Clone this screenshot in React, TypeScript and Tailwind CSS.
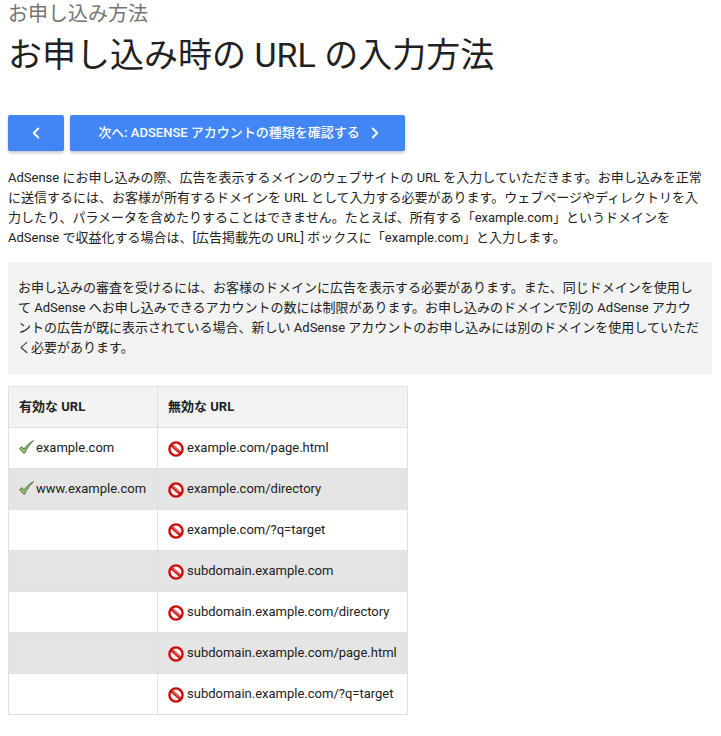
import { ChevronLeft, ChevronRight } from "lucide-react";

const rows = [
  ["example.com", "example.com/page.html"],
  ["www.example.com", "example.com/directory"],
  ["", "example.com/?q=target"],
  ["", "subdomain.example.com"],
  ["", "subdomain.example.com/directory"],
  ["", "subdomain.example.com/page.html"],
  ["", "subdomain.example.com/?q=target"],
];

function Check() {
  return (
    <svg width="15" height="14" viewBox="0 0 15 14" className="mr-[2px] inline-block align-[-2px]">
      <path d="M0.6 8.6 L2.8 6.6 L5 9 C7.5 5.6 10.4 2.8 14.6 0.6 C11 4 8 8 5.6 13.2 L4.6 13.2 Z" fill="#8cc265" stroke="#41592f" strokeWidth="0.8" strokeLinejoin="round" />
    </svg>
  );
}

function Ban() {
  return (
    <svg width="16" height="16" viewBox="0 0 16 16" className="mr-[3px] inline-block align-[-5px]">
      <circle cx="8" cy="8" r="6.6" fill="#f8f4f4" stroke="#cc0a0a" strokeWidth="2.4" />
      <path d="M3.4 3.9 L12.6 12.1" stroke="#d01010" strokeWidth="3" />
      <path d="M4.6 4.4 L11.6 10.7" stroke="#f3b8b8" strokeWidth="0.8" />
    </svg>
  );
}

export default function App() {
  return (
    <div className="h-[736px] overflow-hidden bg-white pt-[2px] pr-[9px] pl-2 text-[13px] leading-5 text-[#212121] font-['Roboto','Noto_Sans_CJK_JP',sans-serif]">
      <p className="text-[20px] leading-6 text-[#757575]">お申し込み方法</p>
      <h1 className="mt-[9px] text-[34px] leading-[40px] font-normal">お申し込み時の URL の入力方法</h1>

      <div className="mt-[40px] flex gap-[6px]">
        <button type="button" className="flex h-9 w-14 items-center justify-center rounded-[2px] bg-[#4285f4] text-white shadow-[0_2px_3px_rgba(0,0,0,0.22)]">
          <ChevronLeft size={18} strokeWidth={2.5} />
        </button>
        <button type="button" className="flex h-9 w-[335px] items-center justify-center gap-[6px] rounded-[2px] bg-[#4285f4] pl-[7px] text-[13px] font-medium text-white shadow-[0_2px_3px_rgba(0,0,0,0.22)]">
          次へ: ADSENSE アカウントの種類を確認する
          <ChevronRight size={18} strokeWidth={2.5} />
        </button>
      </div>

      <p className="mt-[17px]">
        AdSense にお申し込みの際、広告を表示するメインのウェブサイトの URL を入力していただきます。お申し込みを正常<br />
        に送信するには、お客様が所有するドメインを URL として入力する必要があります。ウェブページやディレクトリを入<br />
        力したり、パラメータを含めたりすることはできません。たとえば、所有する「example.com」というドメインを<br />
        AdSense で収益化する場合は、[広告掲載先の URL] ボックスに「example.com」と入力します。
      </p>

      <div className="mt-[14px] bg-[#f3f3f3] px-[10px] py-[16px]">
        お申し込みの審査を受けるには、お客様のドメインに広告を表示する必要があります。また、同じドメインを使用し<br />
        て AdSense へお申し込みできるアカウントの数には制限があります。お申し込みのドメインで別の AdSense アカウ<br />
        ントの広告が既に表示されている場合、新しい AdSense アカウントのお申し込みには別のドメインを使用していただ<br />
        く必要があります。
      </div>

      <table className="mt-3 w-[400px] table-fixed border-collapse">
        <thead>
          <tr className="h-[41px] bg-[#f3f3f3] text-left">
            <th className="w-[149px] border border-[#e0e0e0] px-[10px] font-bold">有効な URL</th>
            <th className="border border-[#e0e0e0] px-[10px] font-bold">無効な URL</th>
          </tr>
        </thead>
        <tbody>
          {rows.map(([ok, bad], i) => (
            <tr key={bad} className={i % 2 === 1 ? "h-[41px] bg-[#e5e5e5]" : "h-[41px]"}>
              <td className="border border-[#e0e0e0] px-[10px] whitespace-nowrap">
                {ok && <><Check />{ok}</>}
              </td>
              <td className="border border-[#e0e0e0] px-[10px] whitespace-nowrap">
                <Ban />{bad}
              </td>
            </tr>
          ))}
        </tbody>
      </table>
    </div>
  );
}
